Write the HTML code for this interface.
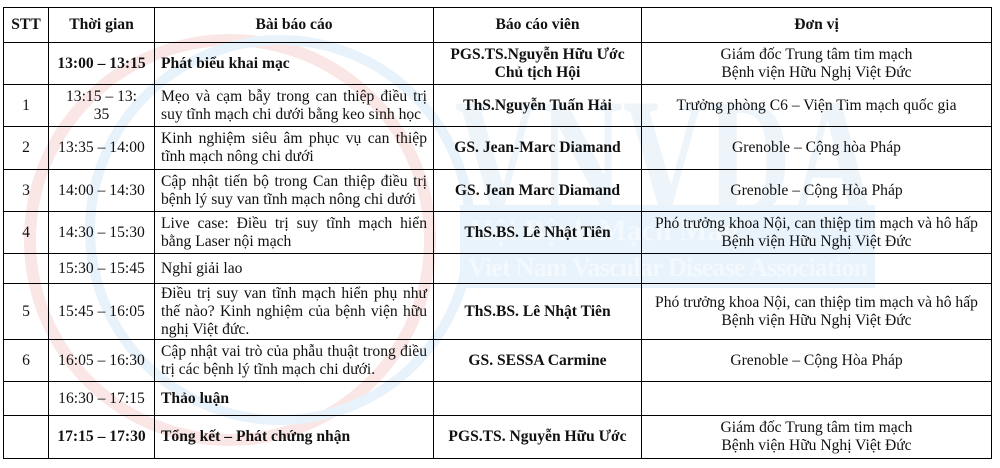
<!DOCTYPE html>
<html><head><meta charset="utf-8"><style>
body{margin:0;background:#fff;width:1000px;height:468px;overflow:hidden;position:relative;font-family:"Liberation Serif",serif;font-size:15.6px;color:#111}
.wm{position:absolute;z-index:0}
table{position:absolute;left:3px;top:7px;border-collapse:collapse;z-index:1;table-layout:fixed}
td{border:1.5px solid #000;padding:0 4px;line-height:18px;text-align:center;vertical-align:middle;white-space:normal}
td.t{text-align:justify;padding:0 6px}
b{font-weight:bold}
</style></head><body>
<svg class="wm" style="left:0;top:0" width="1000" height="468">
<circle cx="230" cy="240" r="200" fill="none" stroke="#fbe6e6" stroke-width="12"/>
<circle cx="280" cy="230" r="190" fill="none" stroke="#e8f2fa" stroke-width="10"/>
<text x="455" y="215" textLength="420" lengthAdjust="spacingAndGlyphs" font-family="Liberation Serif" font-weight="bold" font-size="170" fill="#edf5fb">VNVDA</text>
<rect x="460" y="205" width="415" height="83" fill="#e8f3fb"/>
<text x="470" y="240" font-family="Liberation Serif" font-weight="bold" font-size="30" fill="#f3f9fd">Hội Bệnh Mạch Máu</text>
<text x="468" y="276" textLength="400" font-family="Liberation Serif" font-weight="bold" font-size="26" fill="#f3f9fd">Viet Nam Vascular Disease Association</text>
</svg>
<table>
<colgroup><col style="width:45px"><col style="width:106px"><col style="width:279px"><col style="width:208px"><col style="width:350px"></colgroup>
<tr style="height:35px"><td><b>STT</b></td><td><b>Thời gian</b></td><td><b>Bài báo cáo</b></td><td><b>Báo cáo viên</b></td><td><b>Đơn vị</b></td></tr>
<tr style="height:42px"><td></td><td style="padding:0 2px"><b>13:00 – 13:15</b></td><td class="t"><b>Phát biểu khai mạc</b></td><td><b>PGS.TS.Nguyễn Hữu Ước<br>Chủ tịch Hội</b></td><td>Giám đốc Trung tâm tim mạch<br>Bệnh viện Hữu Nghị Việt Đức</td></tr>
<tr style="height:42px"><td>1</td><td>13:15 – 13:<br>35</td><td class="t">Mẹo và cạm bẫy trong can thiệp điều trị suy tĩnh mạch chi dưới bằng keo sinh học</td><td><b>ThS.Nguyễn Tuấn Hải</b></td><td>Trưởng phòng C6 – Viện Tim mạch quốc gia</td></tr>
<tr style="height:43px"><td>2</td><td style="padding:0 2px">13:35 – 14:00</td><td class="t">Kinh nghiệm siêu âm phục vụ can thiệp tĩnh mạch nông chi dưới</td><td><b>GS. Jean-Marc Diamand</b></td><td>Grenoble – Cộng hòa Pháp</td></tr>
<tr style="height:42px"><td>3</td><td style="padding:0 2px">14:00 – 14:30</td><td class="t">Cập nhật tiến bộ trong Can thiệp điều trị bệnh lý suy van tĩnh mạch nông chi dưới</td><td><b>GS. Jean Marc Diamand</b></td><td>Grenoble – Cộng Hòa Pháp</td></tr>
<tr style="height:42px"><td>4</td><td style="padding:0 2px">14:30 – 15:30</td><td class="t">Live case: Điều trị suy tĩnh mạch hiển bằng Laser nội mạch</td><td><b>ThS.BS. Lê Nhật Tiên</b></td><td style="padding:0 2px">Phó trưởng khoa Nội, can thiệp tim mạch và hô hấp<br>Bệnh viện Hữu Nghị Việt Đức</td></tr>
<tr style="height:30px"><td></td><td style="padding:0 2px">15:30 – 15:45</td><td class="t">Nghỉ giải lao</td><td></td><td></td></tr>
<tr style="height:56px"><td>5</td><td style="padding:0 2px">15:45 – 16:05</td><td class="t">Điều trị suy van tĩnh mạch hiển phụ như thế nào? Kinh nghiệm của bệnh viện hữu nghị Việt đức.</td><td><b>ThS.BS. Lê Nhật Tiên</b></td><td style="padding:0 2px">Phó trưởng khoa Nội, can thiệp tim mạch và hô hấp<br>Bệnh viện Hữu Nghị Việt Đức</td></tr>
<tr style="height:42px"><td>6</td><td style="padding:0 2px">16:05 – 16:30</td><td class="t">Cập nhật vai trò của phẫu thuật trong điều trị các bệnh lý tĩnh mạch chi dưới.</td><td><b>GS. SESSA Carmine</b></td><td>Grenoble – Cộng Hòa Pháp</td></tr>
<tr style="height:34px"><td></td><td style="padding:0 2px">16:30 – 17:15</td><td class="t"><b>Thảo luận</b></td><td></td><td></td></tr>
<tr style="height:43px"><td></td><td style="padding:0 2px"><b>17:15 – 17:30</b></td><td class="t"><b>Tổng kết – Phát chứng nhận</b></td><td><b>PGS.TS. Nguyễn Hữu Ước</b></td><td>Giám đốc Trung tâm tim mạch<br>Bệnh viện Hữu Nghị Việt Đức</td></tr>
</table>
</body></html>
